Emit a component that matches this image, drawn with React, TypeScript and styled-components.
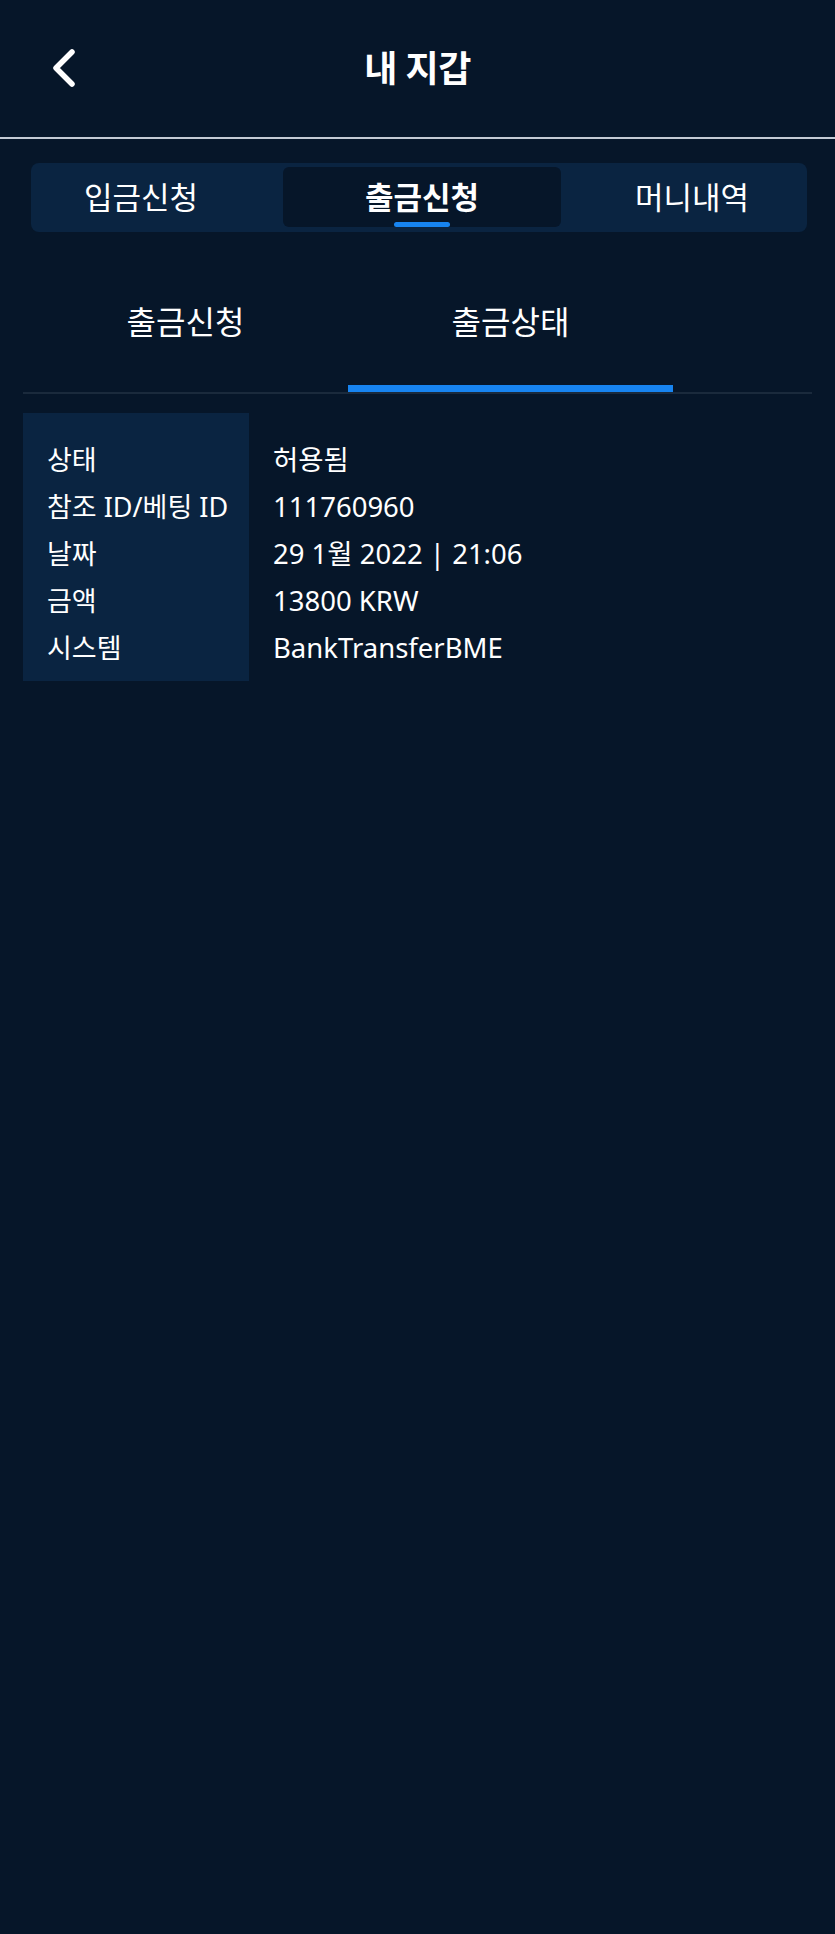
import { useState } from "react";
import styled, { createGlobalStyle } from "styled-components";

const GlobalStyle = createGlobalStyle`
  html, body {
    margin: 0;
    padding: 0;
    background: #061629;
  }
  body {
    font-family: "Noto Sans", "Noto Sans CJK KR", sans-serif;
    color: #ffffff;
  }
`;

const Page = styled.div`
  min-height: 1934px;
  background: #061629;
`;

const Header = styled.header`
  height: 137px;
  display: grid;
  grid-template-columns: 1fr auto 1fr;
  align-items: center;
  border-bottom: 2px solid #c3cad4;
`;

const BackButton = styled.button`
  justify-self: start;
  margin-left: 50px;
  margin-top: -2px;
  padding: 0;
  border: none;
  background: none;
  display: flex;
  cursor: pointer;
`;

const Title = styled.h1`
  margin: 0;
  font-size: 36px;
  font-weight: 700;
  letter-spacing: -0.5px;
  margin-top: -5px;
`;

const Segment = styled.div`
  margin: 24px 28px 0 31px;
  height: 69px;
  padding: 4px 4px 5px;
  box-sizing: border-box;
  background: #0a2441;
  border-radius: 8px;
  display: grid;
  grid-template-columns: 248px 278px 1fr;
`;

const SegmentItem = styled.div<{ $active?: boolean; $shift?: number }>`
  position: relative;
  display: flex;
  align-items: center;
  justify-content: center;
  padding-left: ${(p) => (p.$shift && p.$shift > 0 ? p.$shift : 0)}px;
  padding-right: ${(p) => (p.$shift && p.$shift < 0 ? -p.$shift : 0)}px;
  padding-bottom: 4px;
  font-size: 31px;
  font-weight: ${(p) => (p.$active ? 700 : 400)};
  background: ${(p) => (p.$active ? "#061629" : "transparent")};
  border-radius: 6px;
  cursor: pointer;
`;

const Indicator = styled.span`
  position: absolute;
  left: 50%;
  bottom: 0;
  width: 56px;
  height: 5px;
  margin-left: -28px;
  border-radius: 3px;
  background: #1784f0;
`;

const SubTabs = styled.div`
  margin: 20px 23px 0;
  display: flex;
  border-bottom: 2px solid #1a2a3c;
`;

const SubTab = styled.div<{ $active?: boolean }>`
  width: 325px;
  height: 140px;
  box-sizing: border-box;
  display: flex;
  align-items: center;
  justify-content: center;
  padding-top: 2px;
  font-size: 32px;
  border-bottom: 7px solid ${(p) => (p.$active ? "#1784f0" : "transparent")};
  cursor: pointer;
`;

const Details = styled.div`
  margin: 19px 23px 0;
  display: flex;
  font-size: 27.5px;
  line-height: 47px;
`;

const LabelColumn = styled.div`
  width: 226px;
  box-sizing: border-box;
  padding: 23px 0 10px 24px;
  background: #0a2441;
  font-size: 27px;
  white-space: nowrap;
`;

const ValueColumn = styled.div`
  padding: 23px 0 10px 24px;
  white-space: nowrap;
`;

const Row = styled.div`
  height: 47px;
`;

const rows: [string, string][] = [
  ["상태", "허용됨"],
  ["참조 ID/베팅 ID", "111760960"],
  ["날짜", "29 1월 2022 | 21:06"],
  ["금액", "13800 KRW"],
  ["시스템", "BankTransferBME"],
];

const segments = [
  { label: "입금신청", shift: -36 },
  { label: "출금신청", shift: 0 },
  { label: "머니내역", shift: 20 },
];

export default function App() {
  const [segment, setSegment] = useState(1);
  const [subTab, setSubTab] = useState(1);

  return (
    <Page>
      <GlobalStyle />
      <Header>
        <BackButton aria-label="back">
          <svg width="28" height="42" viewBox="0 0 28 42">
            <path d="M22 5 L6 21 L22 37" fill="none" stroke="#fff" strokeWidth="5.5" strokeLinecap="round" strokeLinejoin="round" />
          </svg>
        </BackButton>
        <Title>내 지갑</Title>
        <div />
      </Header>

      <Segment>
        {segments.map((s, i) => (
          <SegmentItem key={s.label} $active={segment === i} $shift={s.shift} onClick={() => setSegment(i)}>
            {s.label}
            {segment === i && <Indicator />}
          </SegmentItem>
        ))}
      </Segment>

      <SubTabs>
        {["출금신청", "출금상태"].map((t, i) => (
          <SubTab key={t} $active={subTab === i} onClick={() => setSubTab(i)}>
            {t}
          </SubTab>
        ))}
      </SubTabs>

      <Details>
        <LabelColumn>
          {rows.map(([label]) => (
            <Row key={label}>{label}</Row>
          ))}
        </LabelColumn>
        <ValueColumn>
          {rows.map(([label, value]) => (
            <Row key={label}>{value}</Row>
          ))}
        </ValueColumn>
      </Details>
    </Page>
  );
}
